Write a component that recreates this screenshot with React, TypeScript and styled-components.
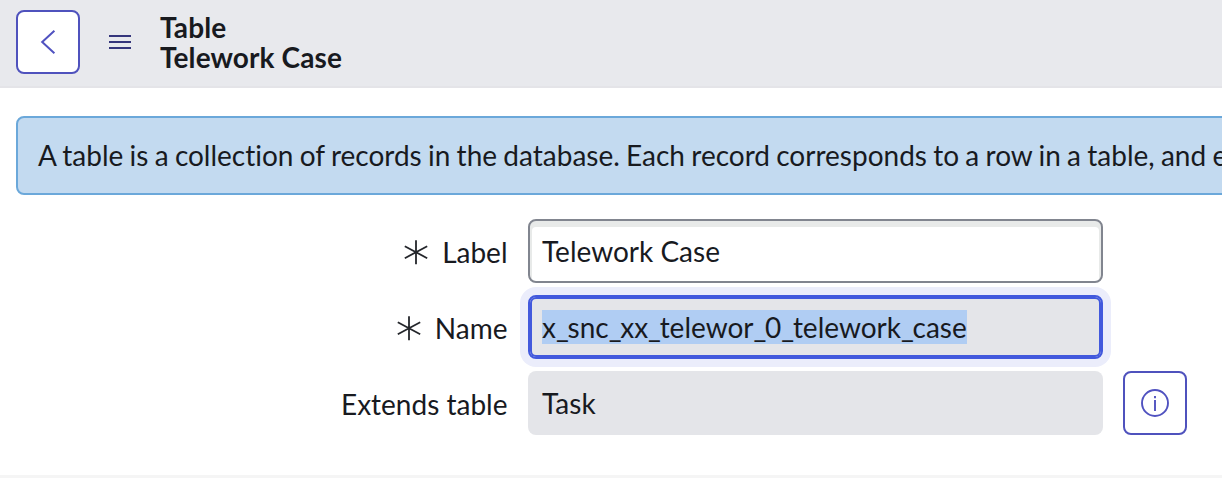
import React from 'react';
import styled, { createGlobalStyle, css } from 'styled-components';

const Global = createGlobalStyle`
  * { box-sizing: border-box; }
  html, body { margin: 0; height: 478px; overflow: hidden; background: #fff; }
  body {
    font-family: Lato, "Liberation Sans", sans-serif;
    font-size: 28px;
    color: #181a1f;
    font-variant-ligatures: none;
  }
`;
const Page = styled.main`
  width: 1222px;
  height: 478px;
  display: flex;
  flex-direction: column;
  overflow: hidden;
`;
const Header = styled.header`
  height: 88px;
  flex: none;
  display: flex;
  align-items: flex-start;
  padding: 10px 16px;
  background: #e8e9ed;
  border-bottom: 2px solid #e4e4e8;
`;
const SquareButton = styled.button`
  width: 64px;
  height: 64px;
  flex: none;
  display: flex;
  align-items: center;
  justify-content: center;
  padding: 0;
  background: #fff;
  border: 2px solid #4f52bd;
  border-radius: 8px;
`;
const MenuButton = styled.button`
  width: 24px;
  height: 64px;
  margin: 0 28px;
  padding: 0;
  border: 0;
  background: none;
  display: flex;
  align-items: center;
  justify-content: center;
`;
const Title = styled.h1`
  margin: 2px 0 0;
  font-size: 28px;
  line-height: 30px;
  font-weight: 700;
  letter-spacing: 0.11px;
  white-space: nowrap;
`;
const Notice = styled.div`
  height: 79px;
  width: 1300px;
  flex: none;
  margin: 28px 0 0 16px;
  padding: 0 20px 2px;
  display: flex;
  align-items: center;
  background: #c3daf0;
  border: 2px solid #6ba8da;
  border-radius: 8px;
  word-spacing: -0.9px;
  white-space: nowrap;
`;
const Form = styled.form`
  display: flex;
  flex-direction: column;
  gap: 12px;
  margin-top: 24px;
  padding-bottom: 40px;
  border-bottom: 3px solid #f5f5f5;
`;
const Row = styled.div`
  height: 64px;
  display: flex;
  align-items: center;
`;
const Label = styled.label`
  width: 507.5px;
  margin-right: 20.5px;
  display: flex;
  align-items: center;
  justify-content: flex-end;
  gap: 13px;
  padding-top: 2px;
`;
const Field = styled.div<{ $kind: 'edit' | 'focus' | 'readonly' }>`
  width: 575px;
  height: 64px;
  display: flex;
  align-items: center;
  padding: 0 14px;
  border-radius: 8px;
  background: #e4e5e9;
  ${p => p.$kind === 'edit' && css`
    padding: 0 12px;
    background: #fff;
    border: 2px solid #81858f;
    box-shadow: inset 0 4px 0 2px #e8eae9;
  `}
  ${p => p.$kind === 'focus' && css`
    padding: 0 12px;
    border: 2px solid #4259dd;
    box-shadow: inset 0 0 0 2px #4259dd, 0 0 0 8px #ebedfb;
  `}
`;
const Selected = styled.span`
  background: #b0cdf3;
`;
const Underscore = styled.span`
  letter-spacing: -1.3px;
`;
const InfoButton = styled(SquareButton)`
  margin-left: 20px;
`;

const Asterisk = () => (
  <svg width="26" height="26" viewBox="0 0 26 26" fill="none" stroke="#24262b" strokeWidth="1.8">
    <path d="M13 1.2v24M1.8 7.2l22.4 12M24.2 7.2l-22.4 12" />
  </svg>
);

const tableName = 'x_snc_xx_telewor_0_telework_case';

export default function App() {
  return (
    <Page>
      <Global />
      <Header>
        <SquareButton type="button" aria-label="Back">
          <svg width="28" height="28" viewBox="0 0 28 28" fill="none" stroke="#5052c0" strokeWidth="2">
            <path d="M20.4 2.8L8.2 14l12.2 11.2" />
          </svg>
        </SquareButton>
        <MenuButton type="button" aria-label="Menu">
          <svg width="24" height="16" viewBox="0 0 24 16" fill="none" stroke="#35367c" strokeWidth="2">
            <path d="M1 2h22M1 8h22M1 14h22" />
          </svg>
        </MenuButton>
        <Title>Table<br />Telework Case</Title>
      </Header>
      <Notice>A table is a collection of records in the database. Each record corresponds to a row in a table, and each</Notice>
      <Form>
        <Row>
          <Label><Asterisk />Label</Label>
          <Field $kind="edit">Telework Case</Field>
        </Row>
        <Row>
          <Label><Asterisk />Name</Label>
          <Field $kind="focus">
            <Selected>
              {tableName.split('_').map((part, i) => (
                <React.Fragment key={i}>{i > 0 && <Underscore>_</Underscore>}{part}</React.Fragment>
              ))}
            </Selected>
          </Field>
        </Row>
        <Row>
          <Label>Extends table</Label>
          <Field $kind="readonly">Task</Field>
          <InfoButton type="button" aria-label="Information">
            <svg width="28" height="28" viewBox="0 0 28 28" fill="none" stroke="#5052c0" strokeWidth="1.9">
              <circle cx="14" cy="14" r="13" />
              <path d="M14 11v11M14 7v2.2" />
            </svg>
          </InfoButton>
        </Row>
      </Form>
    </Page>
  );
}
